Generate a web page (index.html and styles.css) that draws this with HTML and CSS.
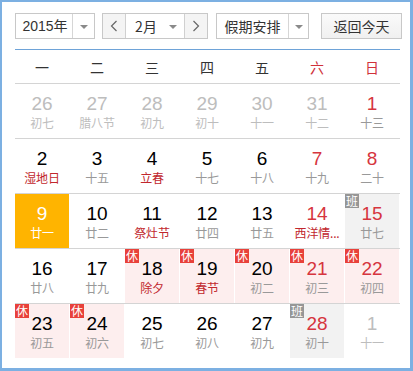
FILE: index.html
```html
<!DOCTYPE html>
<html lang="zh-CN">
<head>
<meta charset="utf-8">
<title>万年历</title>
<link rel="stylesheet" href="styles.css">
</head>
<body>
<div class="cal">
  <div class="toolbar">
    <div class="select year"><span class="val">2015年</span><span class="drop"><i class="tri"></i></span></div>
    <div class="month-group">
      <span class="nav"><svg width="8" height="12" viewBox="0 0 8 12"><polyline points="6.5,1 1.5,6 6.5,11" fill="none" stroke="#666" stroke-width="1.2"/></svg></span>
      <div class="select month"><span class="val">2月</span><span class="drop"><i class="tri"></i></span></div>
      <span class="nav"><svg width="8" height="12" viewBox="0 0 8 12"><polyline points="1.5,1 6.5,6 1.5,11" fill="none" stroke="#666" stroke-width="1.2"/></svg></span>
    </div>
    <div class="select holiday"><span class="val">假期安排</span><span class="drop"><i class="tri"></i></span></div>
    <span class="today">返回今天</span>
  </div>
  <div class="board">
    <div class="weekdays">
      <span>一</span><span>二</span><span>三</span><span>四</span><span>五</span><span class="we">六</span><span class="we">日</span>
    </div>
    <div class="row">
      <div class="cell other"><b>26</b><em>初七</em></div>
      <div class="cell other"><b>27</b><em>腊八节</em></div>
      <div class="cell other"><b>28</b><em>初九</em></div>
      <div class="cell other"><b>29</b><em>初十</em></div>
      <div class="cell other"><b>30</b><em>十一</em></div>
      <div class="cell other"><b>31</b><em>十二</em></div>
      <div class="cell wk"><b>1</b><em>十三</em></div>
    </div>
    <div class="row">
      <div class="cell"><b>2</b><em class="fest">湿地日</em></div>
      <div class="cell"><b>3</b><em>十五</em></div>
      <div class="cell"><b>4</b><em class="fest">立春</em></div>
      <div class="cell"><b>5</b><em>十七</em></div>
      <div class="cell"><b>6</b><em>十八</em></div>
      <div class="cell wk"><b>7</b><em>十九</em></div>
      <div class="cell wk"><b>8</b><em>二十</em></div>
    </div>
    <div class="row">
      <div class="cell sel"><b>9</b><em>廿一</em></div>
      <div class="cell"><b>10</b><em>廿二</em></div>
      <div class="cell"><b>11</b><em class="fest">祭灶节</em></div>
      <div class="cell"><b>12</b><em>廿四</em></div>
      <div class="cell"><b>13</b><em>廿五</em></div>
      <div class="cell wk"><b>14</b><em class="fest">西洋情...</em></div>
      <div class="cell wk work"><span class="badge ban">班</span><b>15</b><em>廿七</em></div>
    </div>
    <div class="row">
      <div class="cell"><b>16</b><em>廿八</em></div>
      <div class="cell"><b>17</b><em>廿九</em></div>
      <div class="cell rest"><span class="badge xiu">休</span><b>18</b><em class="fest">除夕</em></div>
      <div class="cell rest"><span class="badge xiu">休</span><b>19</b><em class="fest">春节</em></div>
      <div class="cell rest"><span class="badge xiu">休</span><b>20</b><em>初二</em></div>
      <div class="cell rest wk"><span class="badge xiu">休</span><b>21</b><em>初三</em></div>
      <div class="cell rest wk"><span class="badge xiu">休</span><b>22</b><em>初四</em></div>
    </div>
    <div class="row last">
      <div class="cell rest"><span class="badge xiu">休</span><b>23</b><em>初五</em></div>
      <div class="cell rest"><span class="badge xiu">休</span><b>24</b><em>初六</em></div>
      <div class="cell"><b>25</b><em>初七</em></div>
      <div class="cell"><b>26</b><em>初八</em></div>
      <div class="cell"><b>27</b><em>初九</em></div>
      <div class="cell wk work"><span class="badge ban">班</span><b>28</b><em>初十</em></div>
      <div class="cell other"><b>1</b><em>十一</em></div>
    </div>
  </div>
</div>
</body>
</html>
```
FILE: styles.css
```css
* { box-sizing: border-box; }
html, body { margin: 0; padding: 0; background: #fff; }
body { font-family: "Liberation Sans", "Noto Sans CJK SC", sans-serif; }

.cal {
  width: 413px;
  height: 371px;
  border: 2px solid #7cb0e2;
  border-right-width: 3px;
  border-bottom-width: 3px;
  padding: 11px 0 0 13px;
}

.toolbar {
  display: flex;
  height: 26px;
  font-family: "Noto Sans CJK SC", sans-serif;
  font-size: 14px;
  color: #333;
}

.select {
  display: flex;
  height: 26px;
  border: 1px solid #c8c8c8;
  background: #fff;
}
.select .val {
  flex: 1;
  display: flex;
  align-items: center;
  justify-content: center;
  line-height: 24px;
}
.select .drop {
  width: 22px;
  border-left: 1px solid #d6d6d6;
  display: flex;
  align-items: center;
  justify-content: center;
}
.tri {
  width: 0;
  height: 0;
  border-left: 4px solid transparent;
  border-right: 4px solid transparent;
  border-top: 4px solid #8a8a8a;
  margin-top: 1px;
}
.year { width: 80px; }
.year .val { font-family: "Liberation Sans", "Noto Sans CJK SC", sans-serif; padding-left: 2px; }

.month-group {
  display: flex;
  width: 106px;
  height: 26px;
  margin-left: 7px;
  border: 1px solid #c8c8c8;
}
.nav {
  width: 22px;
  display: flex;
  align-items: center;
  justify-content: center;
  background: #f4f4f4;
}
.month {
  flex: 1;
  height: 24px;
  border: none;
  border-left: 1px solid #d0d0d0;
  border-right: 1px solid #d0d0d0;
}
.month .val { padding-left: 4px; }
.month .drop { border-left: none; width: 22px; }

.holiday { width: 93px; margin-left: 8px; }
.holiday .drop { width: 20px; }

.today {
  width: 81px;
  height: 26px;
  margin-left: 12px;
  border: 1px solid #c8c8c8;
  background: linear-gradient(#fafafa, #f0f0f0);
  display: flex;
  align-items: center;
  justify-content: center;
}

.board {
  width: 385px;
  margin-top: 10px;
  border-top: 1px solid #6ea3d8;
}

.weekdays {
  display: grid;
  grid-template-columns: repeat(7, 55px);
  height: 34px;
  border-bottom: 1px solid #d4d4d4;
  font-family: "Noto Sans CJK SC", sans-serif;
  font-size: 14px;
  color: #333;
}
.weekdays span {
  display: flex;
  align-items: center;
  justify-content: center;
  padding-right: 1px;
}
.weekdays .we { color: #d0313a; }

.row {
  display: grid;
  grid-template-columns: repeat(7, 55px);
  height: 55px;
  border-bottom: 1px solid #d4d4d4;
}
.row.last { border-bottom: none; height: 54px; }

.cell {
  position: relative;
  width: 54px;
  height: 54px;
  padding-top: 10px;
  text-align: center;
}
.cell b {
  display: block;
  font-family: "Liberation Sans", sans-serif;
  font-weight: normal;
  font-size: 19px;
  line-height: 20px;
  color: #000;
}
.cell em {
  display: block;
  font-style: normal;
  font-family: "Noto Sans CJK SC", sans-serif;
  font-size: 12px;
  line-height: 18px;
  color: #999;
  white-space: nowrap;
  letter-spacing: -0.2px;
}
.cell em.fest { color: #c1272d; }
.cell.wk b { color: #d6353e; }
.cell.other b, .cell.other em { color: #bdbdbd; }

.cell.sel { background: #ffb400; }
.cell.sel b, .cell.sel em { color: #fff; }

.cell.rest { background: #fdeeee; }
.cell.work { background: #f2f2f2; }

.badge {
  position: absolute;
  left: 0;
  top: 0;
  width: 14px;
  height: 14px;
  font-family: "Noto Sans CJK SC", sans-serif;
  font-size: 12px;
  line-height: 14px;
  color: #fff;
  text-align: center;
}
.badge.xiu { background: #e8413a; }
.badge.ban { background: #969696; }
```
